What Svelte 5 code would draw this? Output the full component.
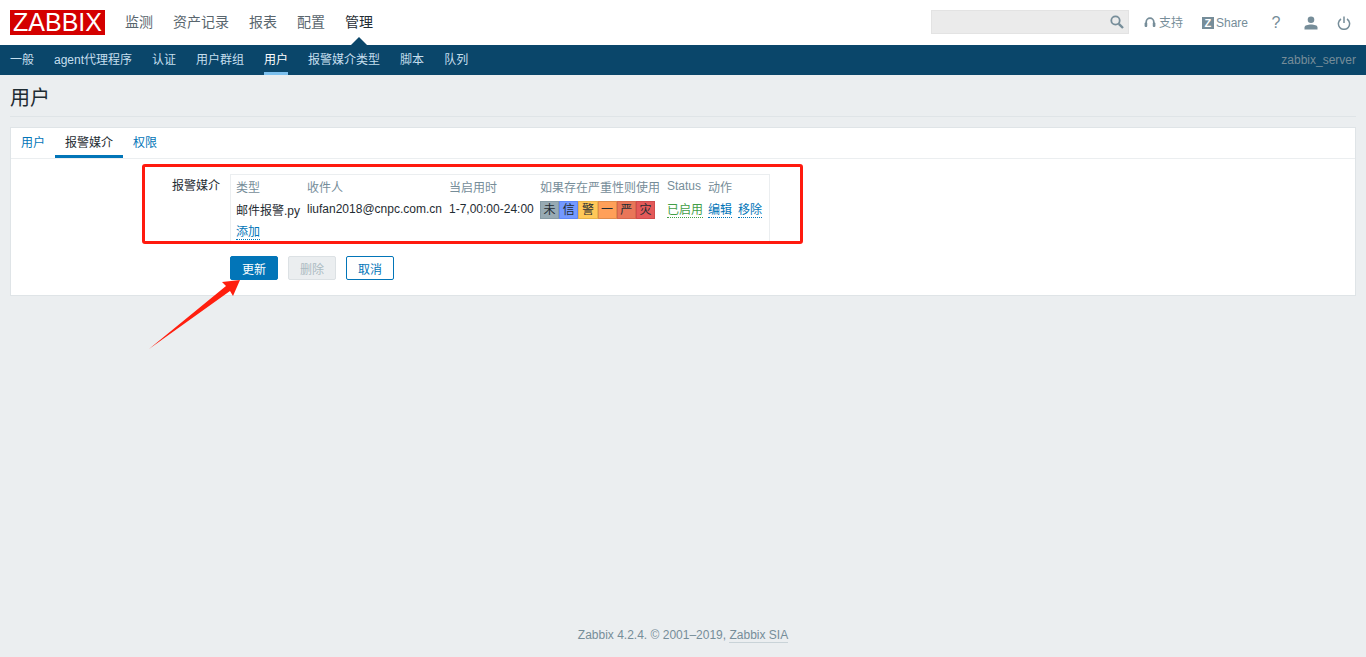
<script>
  const mainNav = ['监测', '资产记录', '报表', '配置', '管理'];
  const subNav = ['一般', 'agent代理程序', '认证', '用户群组', '用户', '报警媒介类型', '脚本', '队列'];
  const tabs = ['用户', '报警媒介', '权限'];
  const heads = ['类型', '收件人', '当启用时', '如果存在严重性则使用', 'Status', '动作'];
  const sev = [
    ['未', 'na'],
    ['信', 'info'],
    ['警', 'warn'],
    ['一', 'avg'],
    ['严', 'high'],
    ['灾', 'dis']
  ];
</script>

<div class="page">
  <header class="top">
    <div class="logo">ZABBIX</div>
    <nav class="main">
      {#each mainNav as item, i}
        <span class="main-item" class:active={i === 4}>{item}</span>
      {/each}
    </nav>
    <div class="tools">
      <div class="search">
        <svg width="16" height="16" viewBox="0 0 16 16"><circle cx="6.5" cy="6.5" r="4.2" fill="none" stroke="#768d99" stroke-width="1.8"/><path d="M9.8 9.8L14 14" stroke="#768d99" stroke-width="2.4"/></svg>
      </div>
      <span class="tool t-support">
        <svg width="12" height="13" viewBox="0 0 12 13"><path d="M2.2 10.5V6a3.8 3.8 0 0 1 7.6 0v4.5" fill="none" stroke="#768d99" stroke-width="1.7"/><rect x="0.6" y="6.5" width="2.6" height="4.5" rx="1" fill="#768d99"/><rect x="8.8" y="6.5" width="2.6" height="4.5" rx="1" fill="#768d99"/></svg>
        支持
      </span>
      <span class="tool t-share"><span class="zbox">Z</span>Share</span>
      <span class="tool t-help">?</span>
      <svg class="t-user" width="14" height="14" viewBox="0 0 14 14"><circle cx="7" cy="3.8" r="3.3" fill="#768d99"/><path d="M0.5 13.5V11.5C0.5 9.5 4 8.6 7 8.6S13.5 9.5 13.5 11.5V13.5Z" fill="#768d99"/></svg>
      <svg class="t-power" width="14" height="14" viewBox="0 0 14 14"><path d="M4 3A5.6 5.6 0 1 0 10 3" fill="none" stroke="#768d99" stroke-width="1.5"/><path d="M7 0.5V7" stroke="#768d99" stroke-width="1.5"/></svg>
    </div>
  </header>

  <nav class="sub">
    {#each subNav as item, i}
      <span class="sub-item" class:current={i === 4}>{item}</span>
    {/each}
    <span class="server">zabbix_server</span>
  </nav>

  <main class="content">
    <h1 class="title">用户</h1>
    <section class="panel">
      <div class="tabs">
        {#each tabs as tab, i}
          <span class="tab" class:selected={i === 1}>{tab}</span>
        {/each}
      </div>
      <div class="form">
        <div class="row">
          <div class="label">报警媒介</div>
          <div class="media">
            <table>
              <thead>
                <tr>
                  {#each heads as h}<th>{h}</th>{/each}
                </tr>
              </thead>
              <tbody>
                <tr>
                  <td>邮件报警.py</td>
                  <td>liufan2018@cnpc.com.cn</td>
                  <td>1-7,00:00-24:00</td>
                  <td class="sev-cell">
                    <div class="sevs">
                      {#each sev as s}<span class="sv {s[1]}">{s[0]}</span>{/each}
                    </div>
                  </td>
                  <td class="status-cell"><span class="dotted green">已启用</span></td>
                  <td class="actions"><span class="dotted">编辑</span><span class="dotted">移除</span></td>
                </tr>
                <tr class="add-row">
                  <td colspan="6"><span class="dotted">添加</span></td>
                </tr>
              </tbody>
            </table>
          </div>
        </div>
        <div class="buttons">
          <button class="btn primary">更新</button>
          <button class="btn disabled">删除</button>
          <button class="btn alt">取消</button>
        </div>
      </div>
    </section>
  </main>

  <footer class="foot">Zabbix 4.2.4. © 2001–2019, <span class="foot-link">Zabbix SIA</span></footer>

  <div class="annot-box"></div>
  <svg class="annot-arrow" width="110" height="80" viewBox="140 275 110 80">
    <polygon points="149,349 226,286 222,282 240,280 233,296 230,291" fill="#ff1f0f"/>
  </svg>
</div>

<style>
  :global(body) {
    margin: 0;
    background: #ebeef0;
  }
  .page {
    position: relative;
    min-height: 657px;
    display: flex;
    flex-direction: column;
    font: 12px "Liberation Sans", "Noto Sans CJK SC", sans-serif;
    color: #1f2c33;
    background: #ebeef0;
    overflow: hidden;
  }
  .top {
    height: 45px;
    box-sizing: border-box;
    background: #fff;
    display: flex;
    align-items: center;
    padding-left: 10px;
  }
  .logo {
    width: 95px;
    height: 25px;
    background: #d40000;
    color: #fff;
    font-size: 25px;
    line-height: 25px;
    text-align: center;
    white-space: nowrap;
  }
  .main {
    display: flex;
    gap: 20px;
    margin-left: 20px;
  }
  .main-item {
    position: relative;
    font-size: 14px;
    line-height: 45px;
    color: #59666e;
  }
  .main-item.active {
    color: #1f2c33;
  }
  .main-item.active::after {
    content: "";
    position: absolute;
    left: 50%;
    bottom: 0;
    margin-left: -8px;
    border-left: 8px solid transparent;
    border-right: 8px solid transparent;
    border-bottom: 8px solid #0a466a;
  }
  .tools {
    margin-left: auto;
    display: flex;
    align-items: center;
    color: #768d99;
    padding-right: 15px;
  }
  .search {
    width: 198px;
    height: 24px;
    margin-top: -1px;
    box-sizing: border-box;
    background: #ebebeb;
    border: 1px solid #e3e3e3;
    display: flex;
    align-items: center;
    justify-content: flex-end;
    padding-right: 3px;
  }
  .tool {
    display: flex;
    align-items: center;
    line-height: 16px;
  }
  .t-support {
    margin-left: 15px;
    gap: 3px;
  }
  .t-share {
    margin-left: 19px;
    gap: 2px;
  }
  .zbox {
    width: 12px;
    height: 12px;
    background: #768d99;
    color: #fff;
    font-size: 11px;
    font-weight: bold;
    line-height: 12px;
    text-align: center;
  }
  .t-help {
    margin-left: 23px;
    font-size: 16px;
    width: 10px;
    justify-content: center;
  }
  .t-user {
    margin-left: 23px;
  }
  .t-power {
    margin-left: 19px;
  }
  .sub {
    height: 30px;
    background: #0a466a;
    display: flex;
    gap: 20px;
    padding: 0 10px;
    align-items: stretch;
  }
  .sub-item {
    line-height: 30px;
    color: #c5dfee;
    box-sizing: border-box;
  }
  .sub-item.current {
    color: #fff;
    border-bottom: 3px solid #7cc0ee;
  }
  .server {
    margin-left: auto;
    line-height: 30px;
    color: #768d99;
  }
  .content {
    padding: 0 10px;
  }
  .title {
    margin: 0;
    height: 42px;
    box-sizing: border-box;
    border-bottom: 1px solid #dfe4e7;
    font-size: 20px;
    font-weight: normal;
    line-height: 46px;
    color: #1f2c33;
  }
  .panel {
    margin-top: 10px;
    height: 169px;
    box-sizing: border-box;
    background: #fff;
    border: 1px solid #dfe4e7;
  }
  .tabs {
    display: flex;
    height: 31px;
    box-sizing: border-box;
    border-bottom: 1px solid #ebeef0;
  }
  .tab {
    padding: 0 10px;
    line-height: 30px;
    color: #0275b8;
    height: 30px;
    box-sizing: border-box;
  }
  .tab.selected {
    color: #1f2c33;
    border-bottom: 3px solid #0275b8;
  }
  .form {
    padding-top: 15px;
  }
  .row {
    display: flex;
    gap: 10px;
  }
  .label {
    width: 209px;
    text-align: right;
    line-height: 24px;
    color: #1f2c33;
  }
  .media {
    width: 540px;
    height: 70px;
    box-sizing: border-box;
    border: 1px solid #ebeef0;
    padding: 1px 0 0 0;
  }
  table {
    border-collapse: collapse;
    table-layout: fixed;
    width: 538px;
  }
  th {
    font-weight: normal;
    text-align: left;
    color: #768d99;
    height: 20px;
    padding: 0 0 2px 5px;
    white-space: nowrap;
  }
  th:nth-child(1) { width: 66px; }
  th:nth-child(2) { width: 137px; }
  th:nth-child(3) { width: 86px; }
  th:nth-child(4) { width: 122px; }
  th:nth-child(5) { width: 36px; }
  td {
    padding: 0 0 0 5px;
    height: 22px;
    white-space: nowrap;
    vertical-align: middle;
  }
  td.sev-cell {
    height: 20px;
    padding-top: 2px;
  }
  td.status-cell {
    height: 20px;
    padding-bottom: 2px;
  }
  .add-row td {
    height: 21px;
  }
  .sevs {
    display: flex;
    width: 115px;
  }
  .sv {
    flex: 1;
    height: 18px;
    box-sizing: border-box;
    text-align: center;
    line-height: 16px;
    border: 1px solid;
    color: #1f2c33;
  }
  .na { background: #97aab3; border-color: #859aa4; }
  .info { background: #7499ff; border-color: #5f87f7; }
  .warn { background: #ffc859; border-color: #e8b24a; }
  .avg { background: #ffa059; border-color: #e08c4c; }
  .high { background: #e97659; border-color: #d6684d; }
  .dis { background: #e45959; border-color: #d04c4c; }
  .dotted {
    color: #0275b8;
    border-bottom: 1px dotted #0275b8;
  }
  .green {
    color: #429e47;
    border-bottom-color: #429e47;
  }
  .actions {
    display: flex;
    gap: 6px;
    align-items: center;
  }
  .buttons {
    display: flex;
    gap: 10px;
    margin: 12px 0 0 219px;
  }
  .btn {
    width: 48px;
    height: 24px;
    box-sizing: border-box;
    font: inherit;
    border-radius: 2px;
    border: 1px solid;
    padding: 0;
  }
  .primary {
    background: #0275b8;
    border-color: #0275b8;
    color: #fff;
  }
  .disabled {
    background: #ebeef0;
    border-color: #dce1e4;
    color: #acbbc2;
  }
  .alt {
    background: #fff;
    border-color: #0275b8;
    color: #0275b8;
  }
  .foot {
    margin-top: auto;
    padding-bottom: 15px;
    text-align: center;
    line-height: 14px;
    color: #768d99;
  }
  .foot-link {
    border-bottom: 1px solid #c9d3d8;
  }
  .annot-box {
    position: absolute;
    left: 142px;
    top: 164px;
    width: 661px;
    height: 80px;
    box-sizing: border-box;
    border: 3px solid #ff1a0f;
    border-radius: 3px;
  }
  .annot-arrow {
    position: absolute;
    left: 140px;
    top: 275px;
  }
</style>
